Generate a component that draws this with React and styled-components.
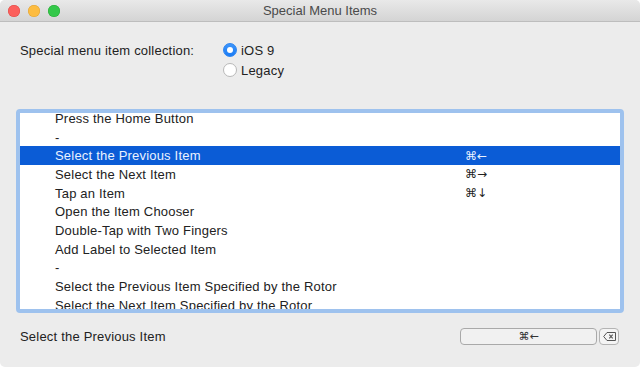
import React from "react";
import styled, { createGlobalStyle } from "styled-components";

const GlobalStyle = createGlobalStyle`
  html, body { margin: 0; padding: 0; background: #ffffff; }
  body { font-family: "Liberation Sans", Arial, "DejaVu Sans", sans-serif; }
`;

const items = [
  { label: "Press the Home Button" },
  { label: "-" },
  { label: "Select the Previous Item", keys: "⌘←", selected: true },
  { label: "Select the Next Item", keys: "⌘→" },
  { label: "Tap an Item", keys: "⌘↓" },
  { label: "Open the Item Chooser" },
  { label: "Double-Tap with Two Fingers" },
  { label: "Add Label to Selected Item" },
  { label: "-" },
  { label: "Select the Previous Item Specified by the Rotor" },
  { label: "Select the Next Item Specified by the Rotor" },
];

export default function App() {
  return (
    <>
      <GlobalStyle />
      <Window>
        <TitleBar>
          <Lights>
            <Light color="#fc605c" edge="#de4a46" />
            <Light color="#fdbc40" edge="#dea236" />
            <Light color="#34c84a" edge="#27aa35" />
          </Lights>
          <Title>Special Menu Items</Title>
        </TitleBar>

        <Body>
          <Settings>
            <FieldLabel>Special menu item collection:</FieldLabel>
            <RadioGroup>
              <RadioRow>
                <Radio checked />
                <span>iOS 9</span>
              </RadioRow>
              <RadioRow>
                <Radio />
                <span>Legacy</span>
              </RadioRow>
            </RadioGroup>
          </Settings>

          <ListBox>
            <Rows>
              {items.map((it, i) => (
                <Row key={i} selected={it.selected}>
                  <span>{it.label}</span>
                  <Keys>{it.keys}</Keys>
                </Row>
              ))}
            </Rows>
          </ListBox>

          <Footer>
            <span>Select the Previous Item</span>
            <ShortcutGroup>
              <ShortcutField>⌘←</ShortcutField>
              <ClearButton>
                <svg width="13" height="9" viewBox="0 0 13 9">
                  <path
                    d="M4 0.5 H12.5 V8.5 H4 L0.7 4.5 Z"
                    fill="none"
                    stroke="#555"
                    strokeWidth="1"
                    strokeLinejoin="round"
                  />
                  <path d="M6.3 2.6 L9.7 6.4 M9.7 2.6 L6.3 6.4" stroke="#555" strokeWidth="1.1" />
                </svg>
              </ClearButton>
            </ShortcutGroup>
          </Footer>
        </Body>
      </Window>
    </>
  );
}

const Window = styled.div`
  width: 640px;
  height: 367px;
  background: #ececec;
  border-radius: 5px;
  overflow: hidden;
  display: flex;
  flex-direction: column;
  font-size: 13px;
  letter-spacing: 0.2px;
  color: #222;
`;

const TitleBar = styled.div`
  height: 22px;
  flex-shrink: 0;
  position: relative;
  display: flex;
  align-items: center;
  justify-content: center;
  background: linear-gradient(#e9e9e9, #d4d4d4);
  border-bottom: 1px solid #bdbdbd;
  box-sizing: border-box;
`;

const Lights = styled.div`
  position: absolute;
  left: 8px;
  top: 5px;
  display: flex;
  gap: 8px;
`;

const Light = styled.span`
  width: 12px;
  height: 12px;
  border-radius: 50%;
  background: ${(p) => p.color};
  box-shadow: inset 0 0 0 0.5px ${(p) => p.edge};
`;

const Title = styled.div`
  font-size: 13px;
  letter-spacing: 0;
  color: #4a4a4a;
`;

const Body = styled.div`
  display: flex;
  flex-direction: column;
  padding: 18px 20px 0;
`;

const Settings = styled.div`
  display: flex;
  align-items: flex-start;
  height: 40px;
`;

const FieldLabel = styled.div`
  width: 202px;
  line-height: 20px;
  padding-top: 1px;
`;

const RadioGroup = styled.div`
  display: flex;
  flex-direction: column;
`;

const RadioRow = styled.label`
  display: flex;
  align-items: center;
  height: 20px;
  gap: 4px;
  margin-left: 1px;
`;

const Radio = styled.span`
  width: 14px;
  height: 14px;
  border-radius: 50%;
  box-sizing: border-box;
  display: flex;
  align-items: center;
  justify-content: center;
  background: ${(p) => (p.checked ? "linear-gradient(#3d95fb, #1a7bf5)" : "#ffffff")};
  border: 1px solid ${(p) => (p.checked ? "#2c84f0" : "#b8b8b8")};
  &::after {
    content: "";
    display: ${(p) => (p.checked ? "block" : "none")};
    width: 6px;
    height: 6px;
    border-radius: 50%;
    background: #ffffff;
  }
`;

const ListBox = styled.div`
  margin: 29px -4px 0;
  height: 204px;
  box-sizing: border-box;
  border: 4px solid #9ec2ee;
  border-radius: 4px;
  background: #ffffff;
  overflow: hidden;
`;

const Rows = styled.div`
  margin-top: -4px;
`;

const Row = styled.div`
  height: 18.7px;
  display: grid;
  grid-template-columns: 410px 1fr;
  align-items: center;
  padding-left: 35px;
  white-space: nowrap;
  background: ${(p) => (p.selected ? "#0b5cd6" : "transparent")};
  color: ${(p) => (p.selected ? "#eaf2ff" : "#222")};
`;

const Keys = styled.span`
  font-family: "DejaVu Sans", "Liberation Sans", sans-serif;
  font-size: 12px;
  letter-spacing: 0;
`;

const Footer = styled.div`
  margin-top: 13px;
  height: 20px;
  display: flex;
  align-items: center;
  justify-content: space-between;
`;

const ShortcutGroup = styled.div`
  display: flex;
  align-items: center;
  gap: 2px;
  margin-right: 1px;
`;

const ShortcutField = styled.div`
  width: 137px;
  height: 17px;
  box-sizing: border-box;
  border: 1px solid #a9a9a9;
  border-radius: 4px;
  background: #f1f1f1;
  display: flex;
  align-items: center;
  justify-content: center;
  font-family: "DejaVu Sans", sans-serif;
  font-size: 11px;
  letter-spacing: 0;
  color: #333;
`;

const ClearButton = styled.div`
  width: 20px;
  height: 17px;
  box-sizing: border-box;
  border: 1px solid #b4b4b4;
  border-radius: 4px;
  background: #f4f4f4;
  display: flex;
  align-items: center;
  justify-content: center;
`;
